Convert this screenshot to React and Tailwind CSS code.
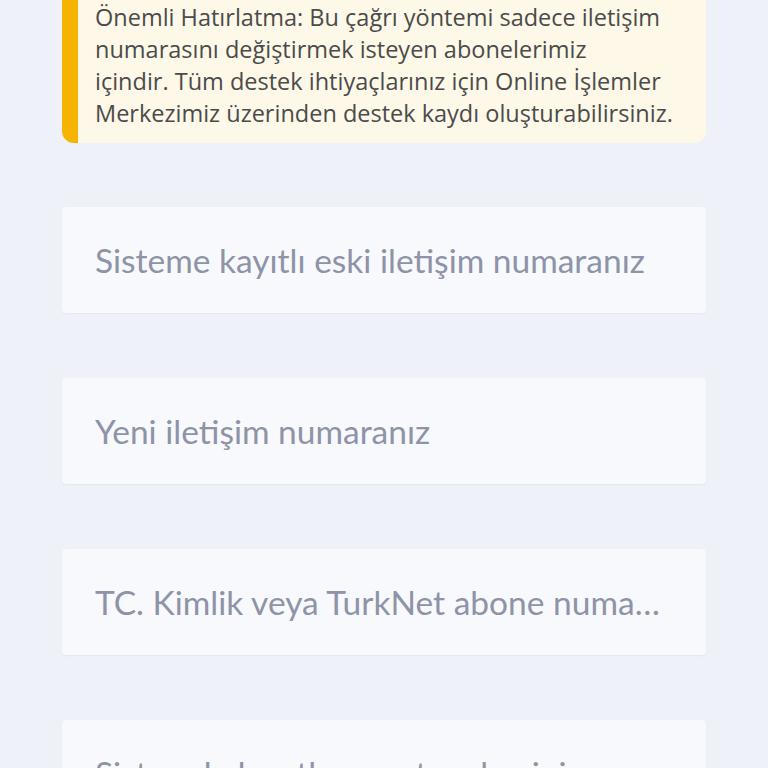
const fields = [
  'Sisteme kayıtlı eski iletişim numaranız',
  'Yeni iletişim numaranız',
  'TC. Kimlik veya TurkNet abone numaranız',
  'Sistemde kayıtlı e-posta adresiniz',
];

export default function App() {
  return (
    <div className="min-h-screen bg-[#eef1f8] px-[62px] pb-10">
      <div className="flex rounded-b-[12px] overflow-hidden bg-[#fdf8e7]">
        <div className="w-[16px] shrink-0 bg-[#f5b400]" />
        <p
          className="pl-[17px] pr-[20px] pt-[1px] pb-[14px] text-[23.5px] leading-[32px] text-[#4b4b4b] whitespace-nowrap"
          style={{ fontFamily: '"Open Sans", "Noto Sans", sans-serif' }}
        >
          Önemli Hatırlatma: Bu çağrı yöntemi sadece iletişim
          <br />
          numarasını değiştirmek isteyen abonelerimiz
          <br />
          içindir. Tüm destek ihtiyaçlarınız için Online İşlemler
          <br />
          Merkezimiz üzerinden destek kaydı oluşturabilirsiniz.
        </p>
      </div>

      <div className="mt-[64px] flex flex-col gap-[65px]">
        {fields.map((f) => (
          <input
            key={f}
            placeholder={f}
            className="h-[106px] w-full rounded-[4px] bg-[#f7f9fc] pl-[33px] pr-[42px] text-[33.5px] text-[#555] placeholder:text-[#8e93a7] shadow-[0_1px_2px_rgba(40,60,110,0.06)] outline-none text-ellipsis"
            style={{ fontFamily: 'Lato, "Liberation Sans", sans-serif' }}
          />
        ))}
      </div>
    </div>
  );
}
